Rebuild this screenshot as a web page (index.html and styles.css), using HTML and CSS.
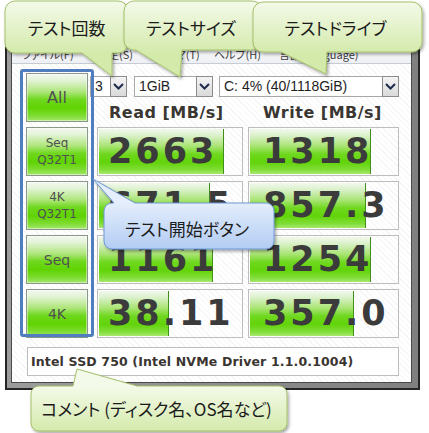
FILE: index.html
```html
<!DOCTYPE html>
<html lang="ja">
<head>
<meta charset="utf-8">
<title>CrystalDiskMark</title>
<link rel="stylesheet" href="styles.css">
</head>
<body>
<div class="stage">
  <div class="window">
    <div class="titlebar"></div>
    <div class="client">
      <div class="menubar">
        <span class="mi mi-file">ファイル(F)</span>
        <span class="mi mi-set">設定(S)</span>
        <span class="mi mi-theme">テーマ(T)</span>
        <span class="mi mi-help">ヘルプ(H)</span>
        <span class="mi mi-lang">言語(Language)</span>
      </div>
      <div class="panel">
        <div class="main">
          <div class="buttons">
            <div class="btn btn-all">All</div>
            <div class="btn btn-two">Seq<br>Q32T1</div>
            <div class="btn btn-two">4K<br>Q32T1</div>
            <div class="btn btn-one">Seq</div>
            <div class="btn btn-one">4K</div>
          </div>
          <div class="results">
            <div class="selects">
              <div class="sel sel-count"><span class="sel-val">3</span><span class="sel-arrow"><svg width="11" height="7" viewBox="0 0 11 7"><path d="M1 1 L5.5 5.5 L10 1" fill="none" stroke="#1d2b4c" stroke-width="2"/></svg></span></div>
              <div class="sel sel-size"><span class="sel-val">1GiB</span><span class="sel-arrow"><svg width="11" height="7" viewBox="0 0 11 7"><path d="M1 1 L5.5 5.5 L10 1" fill="none" stroke="#1d2b4c" stroke-width="2"/></svg></span></div>
              <div class="sel sel-drive"><span class="sel-val">C: 4% (40/1118GiB)</span><span class="sel-arrow"><svg width="11" height="7" viewBox="0 0 11 7"><path d="M1 1 L5.5 5.5 L10 1" fill="none" stroke="#1d2b4c" stroke-width="2"/></svg></span></div>
            </div>
            <div class="heads">
              <div class="head head-read">Read [MB/s]</div>
              <div class="head head-write">Write [MB/s]</div>
            </div>
            <div class="row">
              <div class="cell cell-read"><div class="fill" style="width:86.8%"></div><span class="val">2663</span></div>
              <div class="cell cell-write"><div class="fill" style="width:81.2%"></div><span class="val">1318</span></div>
            </div>
            <div class="row">
              <div class="cell cell-read"><div class="fill" style="width:77.1%"></div><span class="val">671.5</span></div>
              <div class="cell cell-write"><div class="fill" style="width:77.9%"></div><span class="val">857.3</span></div>
            </div>
            <div class="row">
              <div class="cell cell-read"><div class="fill" style="width:79.2%"></div><span class="val">1161</span></div>
              <div class="cell cell-write"><div class="fill" style="width:81.2%"></div><span class="val">1254</span></div>
            </div>
            <div class="row">
              <div class="cell cell-read"><div class="fill" style="width:48.6%"></div><span class="val">38.11</span></div>
              <div class="cell cell-write"><div class="fill" style="width:69.8%"></div><span class="val">357.0</span></div>
            </div>
          </div>
        </div>
        <div class="comment">Intel SSD 750 (Intel NVMe Driver 1.1.0.1004)</div>
      </div>
    </div>
  </div>

  <div class="mark"></div>

  <svg class="callouts" width="429" height="433" viewBox="0 0 429 433">
    <defs>
      <linearGradient id="gTop" gradientUnits="userSpaceOnUse" x1="0" y1="1" x2="0" y2="53">
        <stop offset="0" stop-color="#f4faea"/>
        <stop offset="1" stop-color="#d4eaab"/>
      </linearGradient>
      <linearGradient id="gBot" gradientUnits="userSpaceOnUse" x1="0" y1="386" x2="0" y2="431">
        <stop offset="0" stop-color="#f4faea"/>
        <stop offset="1" stop-color="#d4eaab"/>
      </linearGradient>
      <linearGradient id="gBlue" gradientUnits="userSpaceOnUse" x1="0" y1="203" x2="0" y2="249">
        <stop offset="0" stop-color="#e4eefc"/>
        <stop offset="1" stop-color="#b2ccf3"/>
      </linearGradient>
      <filter id="sh" x="-20%" y="-20%" width="140%" height="170%">
        <feDropShadow dx="1.5" dy="2" stdDeviation="1.8" flood-color="#000" flood-opacity="0.35"/>
      </filter>
    </defs>
    <path filter="url(#sh)" fill="url(#gTop)" stroke="#a3c06a" stroke-width="1"
      d="M15,1 H118 A10,10 0 0 1 128,11 V43 A10,10 0 0 1 118,53 H112 L112,76 L82,53 H15 A10,10 0 0 1 5,43 V11 A10,10 0 0 1 15,1 Z"/>
    <path filter="url(#sh)" fill="url(#gTop)" stroke="#a3c06a" stroke-width="1"
      d="M134,1 H252 A10,10 0 0 1 262,11 V40 A10,10 0 0 1 252,50 H182 L180,77 L136,50 H134 A10,10 0 0 1 124,40 V11 A10,10 0 0 1 134,1 Z"/>
    <path filter="url(#sh)" fill="url(#gTop)" stroke="#a3c06a" stroke-width="1"
      d="M263,2 H412 A10,10 0 0 1 422,12 V42 A10,10 0 0 1 412,52 H327 L326,74 L281,52 H263 A10,10 0 0 1 253,42 V12 A10,10 0 0 1 263,2 Z"/>
    <path filter="url(#sh)" fill="url(#gBlue)" stroke="#6f98d4" stroke-width="1"
      d="M112,203 H114 L93,179 L135,203 H266 A8,8 0 0 1 274,211 V241 A8,8 0 0 1 266,249 H112 A8,8 0 0 1 104,241 V211 A8,8 0 0 1 112,203 Z"/>
    <path filter="url(#sh)" fill="url(#gBot)" stroke="#a3c06a" stroke-width="1"
      d="M39,386 H73 L77,369 L137,386 H279 A8,8 0 0 1 287,394 V423 A8,8 0 0 1 279,431 H39 A8,8 0 0 1 31,423 V394 A8,8 0 0 1 39,386 Z"/>
  </svg>

  <div class="label label-count">テスト回数</div>
  <div class="label label-size">テストサイズ</div>
  <div class="label label-drive">テストドライブ</div>
  <div class="label label-start">テスト開始ボタン</div>
  <div class="label label-comment">コメント (ディスク名、OS名など)</div>
</div>
</body>
</html>
```

FILE: styles.css
```css
html, body {
  margin: 0;
  padding: 0;
  background: #ffffff;
}

.stage {
  position: relative;
  width: 429px;
  height: 433px;
  box-sizing: border-box;
  padding-top: 14px;
  overflow: hidden;
  background: #ffffff;
}

/* window frame */
.window {
  margin-left: 5px;
  width: 415px;
  box-sizing: border-box;
  border: 2px solid #262626;
  background: linear-gradient(to right, #9c9c9c, #808080);
  padding: 0 6px 5px 4px;
}

.titlebar {
  height: 28px;
}

.client {
  border: 1px solid #4a4a4a;
  background-color: #ffffff;
  background-image: repeating-linear-gradient(45deg, transparent 0 3px, rgba(0, 0, 0, 0.04) 3px 4px);
}

/* menu */
.menubar {
  height: 18px;
  border-bottom: 1px solid #c6ccd6;
  background: linear-gradient(#fbfbfc, #eef0f3);
  display: flex;
  align-items: center;
  padding-left: 10px;
  font-family: "Noto Sans CJK JP", sans-serif;
  font-feature-settings: "palt" 1;
  font-size: 11px;
  color: #3c3c3c;
  white-space: nowrap;
}

.mi { display: inline-block; }
.mi-file { width: 75px; }
.mi-set { width: 58px; }
.mi-theme { width: 59px; }
.mi-help { width: 65px; }

/* main panel */
.panel {
  padding: 9px 0 6px 14px;
}

.main {
  display: flex;
}

.buttons {
  display: flex;
  flex-direction: column;
  gap: 5px;
  width: 62px;
}

.btn {
  height: 49px;
  box-sizing: border-box;
  border: 1px solid #8b968a;
  background: linear-gradient(to bottom,
    #f3f7f1 0%,
    #e2f3d6 14%,
    #aee67a 38%,
    #6fd81e 54%,
    #5fd302 72%,
    #7ddc30 88%,
    #a4e76c 100%);
  box-shadow: inset 0 0 0 1px rgba(255, 255, 255, 0.45);
  display: flex;
  align-items: center;
  justify-content: center;
  text-align: center;
  font-family: "DejaVu Sans", sans-serif;
  color: #505050;
}

.btn-all { font-size: 16px; }
.btn-two { font-size: 12px; line-height: 17px; }
.btn-one { font-size: 14px; }

.results {
  margin-left: 9px;
  padding-top: 3px;
  width: 302px;
}

/* drop-down selectors */
.selects {
  display: flex;
  height: 21px;
  margin-left: -7px;
}

.sel {
  display: flex;
  height: 21px;
  box-sizing: border-box;
  border: 1px solid #a7a7a7;
  background: #ffffff;
  font-family: "Liberation Sans", sans-serif;
  font-size: 14px;
  color: #1e1e1e;
}

.sel-count { width: 37px; }
.sel-size { width: 79px; margin-left: 7px; }
.sel-drive { width: 180px; margin-left: 6px; }

.sel-val {
  flex: 1;
  padding-left: 4px;
  line-height: 19px;
  overflow: hidden;
  white-space: nowrap;
}

.sel-arrow {
  width: 17px;
  box-sizing: border-box;
  border: 1px solid #8c8c8c;
  margin: -1px -1px -1px 0;
  background: linear-gradient(#f4f4f4, #dadada);
  display: flex;
  align-items: center;
  justify-content: center;
}

/* column headers */
.heads {
  display: flex;
  gap: 5px;
  height: 30px;
  align-items: center;
}

.head {
  font-family: "DejaVu Sans", sans-serif;
  font-weight: bold;
  font-size: 16px;
  letter-spacing: 0.5px;
  color: #3a3632;
  white-space: nowrap;
}

.head-read { width: 146px; box-sizing: border-box; padding-left: 12px; }
.head-write { width: 151px; box-sizing: border-box; padding-left: 15px; }

/* result rows */
.row {
  display: flex;
  gap: 5px;
}

.row + .row {
  margin-top: 5px;
}

.cell {
  position: relative;
  height: 49px;
  box-sizing: border-box;
  border: 1px solid #bdbdbd;
  background-color: #ffffff;
  background-image: repeating-linear-gradient(45deg, transparent 0 3px, rgba(0, 0, 0, 0.035) 3px 4px);
  overflow: hidden;
}

.cell-read { width: 146px; }
.cell-write { width: 151px; }

.fill {
  position: absolute;
  left: 1px;
  top: 1px;
  bottom: 1px;
  box-sizing: border-box;
  border-right: 1px solid #3f8f18;
  background: linear-gradient(to bottom,
    #f1f8ec 0%,
    #dcf1cc 14%,
    #a9e474 38%,
    #6fd81e 56%,
    #62d40a 74%,
    #80dd36 90%,
    #a6e86e 100%);
}

.val {
  position: relative;
  display: block;
  line-height: 47px;
  font-family: "DejaVu Sans", sans-serif;
  font-weight: bold;
  font-size: 35px;
  letter-spacing: 3px;
  color: #3b3b3b;
  white-space: nowrap;
}

.cell-read .val { padding-left: 10px; }
.cell-write .val { padding-left: 14px; }

/* comment */
.comment {
  margin: 9px 0 0 1px;
  width: 372px;
  height: 29px;
  box-sizing: border-box;
  border: 1px solid #bdbdbd;
  padding-left: 3px;
  line-height: 27px;
  font-family: "DejaVu Sans", sans-serif;
  font-weight: bold;
  font-size: 12.5px;
  letter-spacing: 0.15px;
  color: #3a3530;
  white-space: nowrap;
  background: #ffffff;
}

/* annotation overlays */
.mark {
  position: absolute;
  left: 20px;
  top: 69px;
  width: 74px;
  height: 268px;
  box-sizing: border-box;
  border: 3px solid #4f7dbd;
  border-radius: 3px;
}

.callouts {
  position: absolute;
  left: 0;
  top: 0;
  pointer-events: none;
}

.label {
  position: absolute;
  display: flex;
  align-items: center;
  justify-content: center;
  font-family: "Noto Sans CJK JP", sans-serif;
  font-feature-settings: "palt" 1;
  font-size: 17px;
  color: #1b1b1b;
  white-space: nowrap;
}

.label-count { left: 5px; top: 1px; width: 123px; height: 52px; }
.label-size { left: 124px; top: 2px; width: 134px; height: 50px; }
.label-drive { left: 253px; top: 2px; width: 165px; height: 50px; }
.label-start { left: 104px; top: 205px; width: 166px; height: 46px; }
.label-comment { left: 31px; top: 386px; width: 251px; height: 45px; }
```
